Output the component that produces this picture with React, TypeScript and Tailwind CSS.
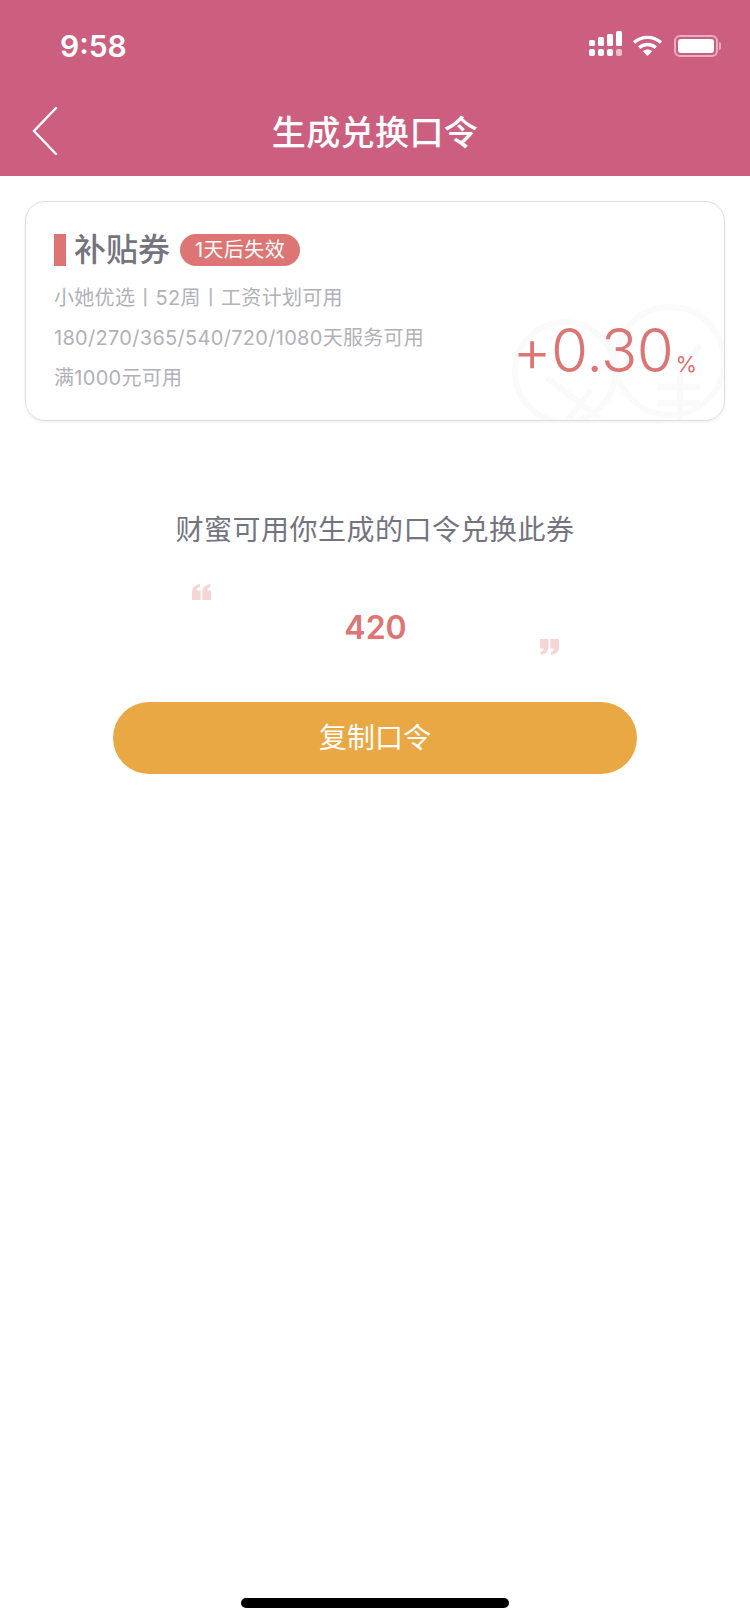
const cjk = { fontFamily: 'Inter, "Noto Sans CJK SC", sans-serif' };

function SignalIcon() {
  return (
    <svg width="33" height="25" viewBox="0 0 33 25" fill="#fff">
      <rect x="0" y="9" width="6" height="6" rx="1.5" />
      <rect x="9" y="6" width="6" height="9" rx="1.5" />
      <rect x="18" y="3" width="6" height="12" rx="1.5" />
      <rect x="27" y="0" width="6" height="15" rx="1.5" />
      <rect x="0" y="18" width="6" height="7" rx="2" />
      <rect x="9" y="18" width="6" height="7" rx="2" />
      <rect x="18" y="18" width="6" height="7" rx="2" />
      <rect x="27" y="18" width="6" height="7" rx="2" opacity="0.6" />
    </svg>
  );
}

function WifiIcon() {
  return (
    <svg width="31" height="21" viewBox="0 0 31 21" fill="none" stroke="#fff" strokeWidth="3.4">
      <path d="M2 7.6C9.6 .6 21.4 .6 29 7.6" />
      <path d="M7.2 12.6C12 8.4 19 8.4 23.8 12.6" />
      <path d="M15.5 21L10.8 16.2C13.6 14 17.4 14 20.2 16.2Z" fill="#fff" stroke="none" />
    </svg>
  );
}

function BatteryIcon() {
  return (
    <div className="flex items-center">
      <div className="w-[44px] h-[22px] rounded-[6px] border-2 border-white/50 p-[2px]">
        <div className="w-full h-full rounded-[3px] bg-white" />
      </div>
      <div className="ml-[1px] w-[2px] h-[8px] rounded-r-full bg-white/50" />
    </div>
  );
}

function Watermark() {
  return (
    <svg
      className="absolute left-0 top-0"
      width="700"
      height="220"
      viewBox="0 0 700 220"
      fill="none"
      stroke="#fafafa"
      strokeWidth="6"
    >
      <circle cx="539" cy="170" r="50" />
      <path d="M521 176L574 216M565 188L540 220" />
      <circle cx="644" cy="159" r="54" />
      <path d="M631 185H674M631 201H674M654 170V220M634 143L654 170L674 143" />
    </svg>
  );
}

function QuoteMark({ flip }: { flip?: boolean }) {
  return (
    <svg
      className={flip ? 'self-end rotate-180' : 'self-start'}
      width="19"
      height="16"
      viewBox="0 0 19 16"
      fill="#f5d5d6"
    >
      <path d="M0 16V8C0 3.5 3 .8 8 0V3C5.8 3.6 4.8 4.8 4.8 6.5H8.6V16Z" />
      <path d="M10.4 16V8C10.4 3.5 13.4 .8 18.4 0V3C16.2 3.6 15.2 4.8 15.2 6.5H19V16Z" />
    </svg>
  );
}

export default function App() {
  return (
    <div className="w-[750px] h-[1624px] bg-white flex flex-col" style={cjk}>
      <div className="h-[176px] bg-[#cc5f7f] text-white flex flex-col shrink-0">
        <div className="h-[88px] pl-[60px] pr-[29px] pt-[26px] flex items-start justify-between">
          <span className="text-[30px] leading-[40px] font-semibold">9:58</span>
          <div className="flex items-start gap-[10px] pt-[5px]">
            <SignalIcon />
            <div className="pt-[4px]">
              <WifiIcon />
            </div>
            <div className="pt-[4px] ml-[1px]">
              <BatteryIcon />
            </div>
          </div>
        </div>
        <div className="relative h-[88px] flex items-start justify-center pt-[23px]">
          <svg
            className="absolute left-[32px] top-[19px]"
            width="26"
            height="48"
            viewBox="0 0 26 48"
            fill="none"
            stroke="#fff"
            strokeWidth="2.4"
            strokeLinecap="round"
          >
            <path d="M24 1L2 24L24 47" />
          </svg>
          <h1 className="text-[34px] leading-[44px] font-medium tracking-[0.4px]">生成兑换口令</h1>
        </div>
      </div>

      <div className="relative overflow-hidden mx-[25px] mt-[25px] h-[220px] rounded-[20px] border border-[#dedede] shadow-[0_1px_3px_rgba(0,0,0,0.08)] pl-[28px] pr-[27px] pt-[32px]">
        <Watermark />
        <div className="relative flex items-center h-[32px]">
          <div className="w-[12px] h-[32px] bg-[#dc7573]" />
          <span className="ml-[8px] text-[32px] leading-[32px] font-medium text-[#74747f]">补贴券</span>
          <span className="ml-[10px] w-[120px] h-[32px] rounded-full bg-[#dc7573] text-white text-[20px] leading-[32px] text-center tracking-[0.4px]">
            1天后失效
          </span>
        </div>
        <div className="relative flex justify-between items-end">
          <div className="pt-[12px] text-[20px] leading-[40px] text-[#b1b1b9] tracking-[0.3px]">
            <p>小她优选丨52周丨工资计划可用</p>
            <p>180/270/365/540/720/1080天服务可用</p>
            <p>满1000元可用</p>
          </div>
          <div className="flex items-baseline text-[#dc7573] pb-[13px]">
            <span className="text-[60px] leading-[70px] font-light tracking-[-0.5px]">+0.30</span>
            <span className="ml-[2px] text-[22px] leading-[20px]">%</span>
          </div>
        </div>
      </div>

      <p className="mt-[89px] text-center text-[28px] leading-[40px] text-[#74747f] tracking-[0.5px]">财蜜可用你生成的口令兑换此券</p>

      <div className="ml-[192px] mt-[34px] w-[367px] h-[71px] flex justify-between items-center">
        <QuoteMark />
        <span className="pt-[16px] text-[32px] leading-[40px] font-semibold text-[#dc7573]">420</span>
        <QuoteMark flip />
      </div>

      <button className="ml-[113px] mt-[47px] w-[524px] h-[72px] rounded-full bg-[#e9a843] text-white text-[28px]">
        复制口令
      </button>

      <div className="mt-auto mb-[16px] mx-auto w-[268px] h-[10px] rounded-full bg-black" />
    </div>
  );
}
